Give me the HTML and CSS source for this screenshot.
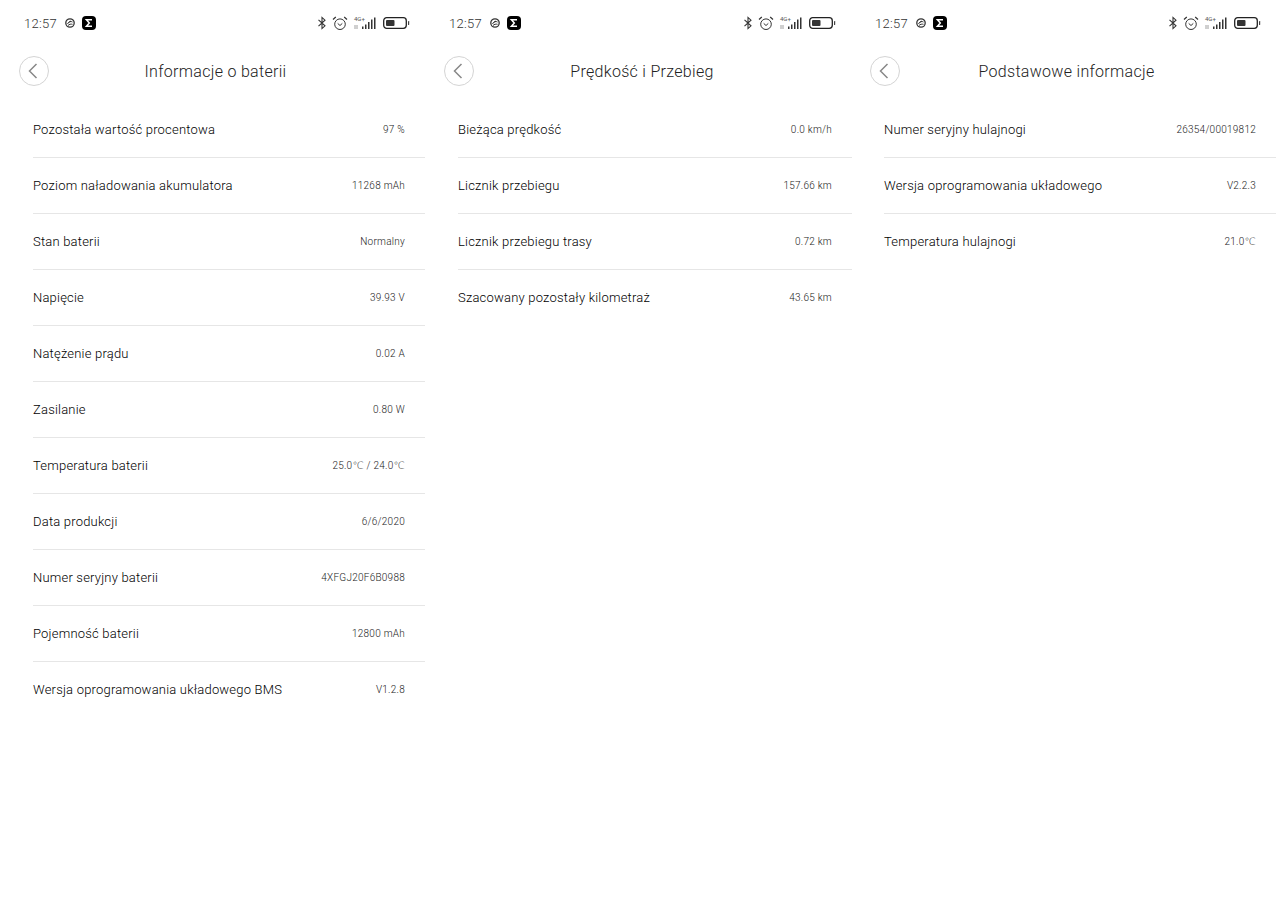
FILE: index.html
```html
<!DOCTYPE html>
<html lang="en">
<head>
  <meta charset="UTF-8">
  <meta name="viewport" content="width=device-width, initial-scale=1.0">
  <title>Informacje o hulajnodze</title>
  <link rel="stylesheet" href="styles.css">
</head>
<body>
  <svg class="icon-defs" width="0" height="0">
    <symbol id="i-chat" viewBox="0 0 12 12">
      <circle cx="6" cy="6" r="4.200" fill="none" stroke="#333" stroke-width="1.300"/>
      <path d="M3.500 7c1-2.500 3.500-3 5-2M4 8.500c1.200-1.300 3-1.600 4.500-1.200M4.500 5.500 7 4" fill="none" stroke="#333" stroke-width="1"/>
    </symbol>
    <symbol id="i-sigma" viewBox="0 0 14 14">
      <rect width="14" height="14" rx="4" fill="#000"/>
      <path d="M10 3.700H4.400L7.300 7 4.400 10.300H10" fill="none" stroke="#fff" stroke-width="1.500"/>
    </symbol>
    <symbol id="i-bt" viewBox="0 0 10 14">
      <path d="M1.500 3.800 8 9.800 5 12.600V1.400l3 2.800-6.500 6" fill="none" stroke="#333" stroke-width="1.100"/>
    </symbol>
    <symbol id="i-alarm" viewBox="0 0 16 15">
      <circle cx="8" cy="8.200" r="5.300" fill="none" stroke="#333" stroke-width="1"/>
      <path d="M5.700 7.400 8 9.500l2.300-2.100" fill="none" stroke="#333" stroke-width="1"/>
      <path d="M1 3.500 3.800 1M15 3.500 12.200 1" fill="none" stroke="#333" stroke-width="1.200"/>
    </symbol>
    <symbol id="i-bars" viewBox="0 0 24 14">
      <path d="M1 9v4M3 9v4" stroke="#888" stroke-width=".8"/>
      <path d="M8 10.500h1.500V13H8zM11 8.500h1.500V13H11zM14 6h1.500v7H14zM17 3.500h1.500V13H17zM20 1.500h1.500V13H20z" fill="#333"/>
    </symbol>
    <symbol id="i-battery" viewBox="0 0 27 12">
      <rect x=".7" y=".7" width="22.600" height="10.600" rx="3" fill="none" stroke="#222" stroke-width="1.300"/>
      <rect x="3" y="3" width="8.500" height="6" rx="1" fill="#333"/>
      <rect x="25" y="4" width="1.200" height="4" rx=".6" fill="#444"/>
    </symbol>
  </svg>

  <section class="panel">
    <div class="status-bar">
      <span class="time">12:57</span>
      <svg class="ic-chat"><use href="#i-chat"/></svg>
      <svg class="ic-sigma"><use href="#i-sigma"/></svg>
      <span class="status-right">
        <svg class="ic-bt"><use href="#i-bt"/></svg>
        <svg class="ic-alarm"><use href="#i-alarm"/></svg>
        <span class="signal"><i>4G+</i><svg class="ic-bars"><use href="#i-bars"/></svg></span>
        <svg class="ic-battery"><use href="#i-battery"/></svg>
      </span>
    </div>
    <header class="top-bar">
      <span class="back-btn"><svg width="10" height="16" viewBox="0 0 10 16"><path d="M8.500 1 1.500 8l7 7" fill="none" stroke="#888" stroke-width="1.500"/></svg></span>
      <h2>Informacje o baterii</h2>
    </header>
    <ul class="info-list">
      <li><span>Pozostała wartość procentowa</span><b>97 %</b></li>
      <li><span>Poziom naładowania akumulatora</span><b>11268 mAh</b></li>
      <li><span>Stan baterii</span><b>Normalny</b></li>
      <li><span>Napięcie</span><b>39.93 V</b></li>
      <li><span>Natężenie prądu</span><b>0.02 A</b></li>
      <li><span>Zasilanie</span><b>0.80 W</b></li>
      <li><span>Temperatura baterii</span><b>25.0℃ / 24.0℃</b></li>
      <li><span>Data produkcji</span><b>6/6/2020</b></li>
      <li><span>Numer seryjny baterii</span><b>4XFGJ20F6B0988</b></li>
      <li><span>Pojemność baterii</span><b>12800 mAh</b></li>
      <li><span>Wersja oprogramowania układowego BMS</span><b>V1.2.8</b></li>
    </ul>
  </section>

  <section class="panel panel-speed">
    <div class="status-bar">
      <span class="time">12:57</span>
      <svg class="ic-chat"><use href="#i-chat"/></svg>
      <svg class="ic-sigma"><use href="#i-sigma"/></svg>
      <span class="status-right">
        <svg class="ic-bt"><use href="#i-bt"/></svg>
        <svg class="ic-alarm"><use href="#i-alarm"/></svg>
        <span class="signal"><i>4G+</i><svg class="ic-bars"><use href="#i-bars"/></svg></span>
        <svg class="ic-battery"><use href="#i-battery"/></svg>
      </span>
    </div>
    <header class="top-bar">
      <span class="back-btn"><svg width="10" height="16" viewBox="0 0 10 16"><path d="M8.500 1 1.500 8l7 7" fill="none" stroke="#888" stroke-width="1.500"/></svg></span>
      <h2>Prędkość i Przebieg</h2>
    </header>
    <ul class="info-list">
      <li><span>Bieżąca prędkość</span><b>0.0 km/h</b></li>
      <li><span>Licznik przebiegu</span><b>157.66 km</b></li>
      <li><span>Licznik przebiegu trasy</span><b>0.72 km</b></li>
      <li><span>Szacowany pozostały kilometraż</span><b>43.65 km</b></li>
    </ul>
  </section>

  <section class="panel panel-basic">
    <div class="status-bar">
      <span class="time">12:57</span>
      <svg class="ic-chat"><use href="#i-chat"/></svg>
      <svg class="ic-sigma"><use href="#i-sigma"/></svg>
      <span class="status-right">
        <svg class="ic-bt"><use href="#i-bt"/></svg>
        <svg class="ic-alarm"><use href="#i-alarm"/></svg>
        <span class="signal"><i>4G+</i><svg class="ic-bars"><use href="#i-bars"/></svg></span>
        <svg class="ic-battery"><use href="#i-battery"/></svg>
      </span>
    </div>
    <header class="top-bar">
      <span class="back-btn"><svg width="10" height="16" viewBox="0 0 10 16"><path d="M8.500 1 1.500 8l7 7" fill="none" stroke="#888" stroke-width="1.500"/></svg></span>
      <h2>Podstawowe informacje</h2>
    </header>
    <ul class="info-list">
      <li><span>Numer seryjny hulajnogi</span><b>26354/00019812</b></li>
      <li><span>Wersja oprogramowania układowego</span><b>V2.2.3</b></li>
      <li><span>Temperatura hulajnogi</span><b>21.0℃</b></li>
    </ul>
  </section>
</body>
</html>
```

FILE: styles.css
```css
html, body {
  height: 100%;
}
body {
  margin: 0;
  display: flex;
  align-items: flex-start;
  background: #fff;
  color: #000;
  font-family: Roboto, "DejaVu Sans", sans-serif;
  overflow: hidden;
}
.icon-defs {
  position: absolute;
}
.panel {
  flex: none;
  width: 425px;
}
.panel-speed {
  margin-right: 1px;
}
.status-bar {
  display: flex;
  align-items: center;
  height: 46px;
  padding: 0 15px 0 24px;
}
.time {
  font-size: 13px;
  font-weight: 300;
  letter-spacing: .3px;
  color: #333;
}
.status-bar svg {
  display: block;
}
.ic-chat {
  width: 12px;
  height: 12px;
  margin-left: 7px;
}
.ic-sigma {
  width: 14px;
  height: 14px;
  margin-left: 6px;
}
.status-right {
  display: flex;
  align-items: center;
  margin-left: auto;
}
.panel-speed .status-right {
  margin-right: -1px;
}
.ic-bt {
  width: 10px;
  height: 14px;
}
.ic-alarm {
  width: 16px;
  height: 15px;
  margin-left: 5px;
}
.signal {
  position: relative;
  width: 24px;
  height: 14px;
  margin-left: 6px;
}
.signal i {
  position: absolute;
  left: 0;
  top: -1px;
  font-size: 6px;
  line-height: 7px;
  font-style: normal;
  color: #555;
}
.ic-bars {
  width: 24px;
  height: 14px;
}
.ic-battery {
  width: 27px;
  height: 12px;
  margin-left: 5px;
}
.top-bar {
  display: flex;
  align-items: center;
  height: 50px;
  padding: 0 43px 0 19px;
}
.panel-speed .top-bar {
  padding-right: 40px;
}
.back-btn {
  display: flex;
  align-items: center;
  justify-content: center;
  box-sizing: border-box;
  width: 30px;
  height: 30px;
  padding-right: 2px;
  border: 1px solid #d4d4d4;
  border-radius: 50%;
}
.top-bar h2 {
  flex: 1;
  margin: 0;
  font-size: 16px;
  font-weight: 300;
  letter-spacing: .3px;
  text-align: center;
  color: #222;
}
.info-list {
  list-style: none;
  margin: 6px 0 0;
  padding: 0 0 0 33px;
}
.info-list li {
  display: flex;
  align-items: center;
  justify-content: space-between;
  box-sizing: border-box;
  height: 56px;
  padding: 0 20px 1px 0;
  border-bottom: 1px solid #e6e6e6;
  font-size: 13px;
  font-weight: 300;
  letter-spacing: .2px;
}
.info-list li:last-child {
  border-bottom-color: transparent;
}
.info-list b {
  font-size: 10px;
  font-weight: 300;
  letter-spacing: .25px;
  color: #222;
}
.panel-speed .info-list {
  margin-right: -2px;
}
```
